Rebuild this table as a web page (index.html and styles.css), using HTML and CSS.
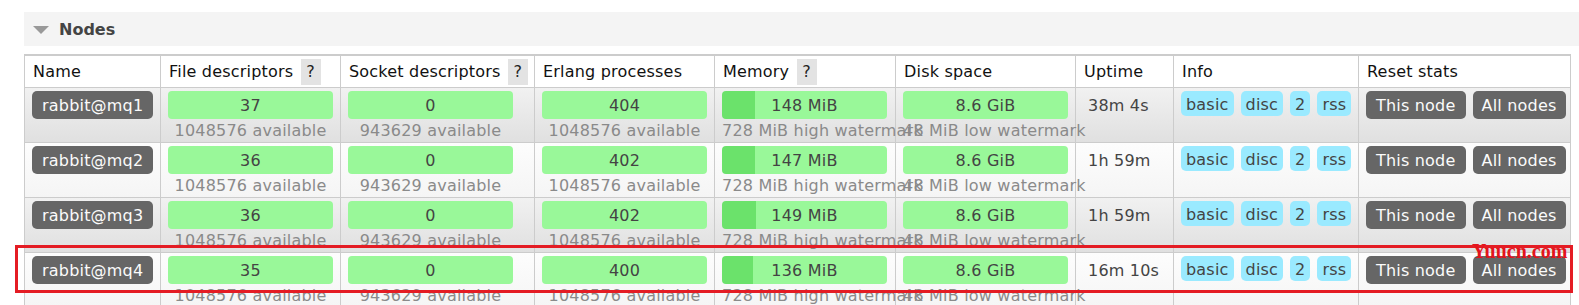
FILE: index.html
```html
<!DOCTYPE html>
<html>
<head>
<meta charset="utf-8">
<title>Nodes</title>
<link rel="stylesheet" href="styles.css">
</head>
<body>
<section class="section">
  <h2 class="section-title"><span class="toggle"></span>Nodes</h2>
  <table class="list">
    <colgroup>
      <col class="w-name"><col class="w-fd"><col class="w-sd"><col class="w-ep"><col class="w-mem"><col class="w-disk"><col class="w-up"><col class="w-info"><col class="w-reset">
    </colgroup>
    <thead>
      <tr>
        <th>Name</th>
        <th>File descriptors <span class="help">?</span></th>
        <th>Socket descriptors <span class="help">?</span></th>
        <th>Erlang processes</th>
        <th>Memory <span class="help">?</span></th>
        <th>Disk space</th>
        <th>Uptime</th>
        <th>Info</th>
        <th>Reset stats</th>
      </tr>
    </thead>
    <tbody>
      <tr class="alt1">
        <td><span class="node">rabbit@mq1</span></td>
        <td><div class="bar">37</div><div class="sub">1048576 available</div></td>
        <td><div class="bar">0</div><div class="sub">943629 available</div></td>
        <td><div class="bar">404</div><div class="sub">1048576 available</div></td>
        <td><div class="bar bar-mem" style="--used: 20.3%">148 MiB</div><div class="sub">728 MiB high watermark</div></td>
        <td><div class="bar">8.6 GiB</div><div class="sub">48 MiB low watermark</div></td>
        <td><div class="uptime">38m 4s</div></td>
        <td><div class="badges"><span class="badge">basic</span><span class="badge">disc</span><span class="badge">2</span><span class="badge">rss</span></div></td>
        <td><div class="buttons"><span class="btn">This node</span><span class="btn">All nodes</span></div></td>
      </tr>
      <tr class="alt2">
        <td><span class="node">rabbit@mq2</span></td>
        <td><div class="bar">36</div><div class="sub">1048576 available</div></td>
        <td><div class="bar">0</div><div class="sub">943629 available</div></td>
        <td><div class="bar">402</div><div class="sub">1048576 available</div></td>
        <td><div class="bar bar-mem" style="--used: 20.2%">147 MiB</div><div class="sub">728 MiB high watermark</div></td>
        <td><div class="bar">8.6 GiB</div><div class="sub">48 MiB low watermark</div></td>
        <td><div class="uptime">1h 59m</div></td>
        <td><div class="badges"><span class="badge">basic</span><span class="badge">disc</span><span class="badge">2</span><span class="badge">rss</span></div></td>
        <td><div class="buttons"><span class="btn">This node</span><span class="btn">All nodes</span></div></td>
      </tr>
      <tr class="alt1">
        <td><span class="node">rabbit@mq3</span></td>
        <td><div class="bar">36</div><div class="sub">1048576 available</div></td>
        <td><div class="bar">0</div><div class="sub">943629 available</div></td>
        <td><div class="bar">402</div><div class="sub">1048576 available</div></td>
        <td><div class="bar bar-mem" style="--used: 20.5%">149 MiB</div><div class="sub">728 MiB high watermark</div></td>
        <td><div class="bar">8.6 GiB</div><div class="sub">48 MiB low watermark</div></td>
        <td><div class="uptime">1h 59m</div></td>
        <td><div class="badges"><span class="badge">basic</span><span class="badge">disc</span><span class="badge">2</span><span class="badge">rss</span></div></td>
        <td><div class="buttons"><span class="btn">This node</span><span class="btn">All nodes</span></div></td>
      </tr>
      <tr class="alt2">
        <td><span class="node">rabbit@mq4</span></td>
        <td><div class="bar">35</div><div class="sub">1048576 available</div></td>
        <td><div class="bar">0</div><div class="sub">943629 available</div></td>
        <td><div class="bar">400</div><div class="sub">1048576 available</div></td>
        <td><div class="bar bar-mem" style="--used: 18.7%">136 MiB</div><div class="sub">728 MiB high watermark</div></td>
        <td><div class="bar">8.6 GiB</div><div class="sub">48 MiB low watermark</div></td>
        <td><div class="uptime">16m 10s</div></td>
        <td><div class="badges"><span class="badge">basic</span><span class="badge">disc</span><span class="badge">2</span><span class="badge">rss</span></div></td>
        <td><div class="buttons"><span class="btn">This node</span><span class="btn">All nodes</span></div></td>
      </tr>
    </tbody>
  </table>
</section>
<div class="highlight"></div>
<div class="watermark">Yuucn.com</div>
</body>
</html>
```

FILE: styles.css
```css
* { box-sizing: border-box; }

body {
  margin: 0;
  width: 1579px;
  height: 305px;
  overflow: hidden;
  position: relative;
  background: #fff;
  font-family: "DejaVu Sans", Verdana, sans-serif;
  font-size: 16px;
  letter-spacing: 0.2px;
  color: #444;
}

.section {
  padding: 12px 0 0 24px;
}

.section-title {
  margin: 0;
  height: 34px;
  background: #f4f4f4;
  display: flex;
  align-items: center;
  gap: 10px;
  padding-left: 9px;
  font-size: 16px;
  font-weight: bold;
  letter-spacing: 0;
  color: #444;
}

.toggle {
  width: 0;
  height: 0;
  border-left: 8px solid transparent;
  border-right: 8px solid transparent;
  border-top: 8px solid #999;
  margin-top: 1px;
}

.list {
  margin-top: 8px;
  width: 1547px;
  table-layout: fixed;
  border-collapse: separate;
  border-spacing: 0;
  border-top: 2px solid #ccc;
  border-left: 1px solid #ccc;
}

.w-name { width: 136px; }
.w-fd { width: 180px; }
.w-sd { width: 194px; }
.w-ep { width: 180px; }
.w-mem { width: 181px; }
.w-disk { width: 180px; }
.w-up { width: 98px; }
.w-info { width: 185px; }
.w-reset { width: 212px; }

.list th,
.list td {
  border-right: 1px solid #ccc;
  border-bottom: 1px solid #ccc;
}

.list th {
  background: #fff;
  color: #111;
  font-weight: normal;
  text-align: left;
  vertical-align: baseline;
  white-space: nowrap;
  line-height: 19px;
  padding: 3px 8px 2px;
}

.help {
  display: inline-block;
  width: 20px;
  height: 26px;
  line-height: 26px;
  text-align: center;
  background: #e3e3e3;
  color: #222;
  margin-left: 2px;
}

.list td {
  vertical-align: top;
  padding: 3px 7px 2px;
  white-space: nowrap;
}

.alt1 td { background: linear-gradient(#f1f1f1, #e0e0e0); }
.alt2 td { background: linear-gradient(#fdfdfd, #f5f5f5); }

.node,
.btn {
  display: inline-block;
  height: 28px;
  line-height: 26px;
  padding: 2px 10px 0;
  background: #666;
  color: #fbfbfb;
  border-radius: 5px;
}

.bar {
  width: 165px;
  height: 28px;
  line-height: 26px;
  padding-top: 2px;
  text-align: center;
  background: #99f899;
  border-radius: 4px;
  color: #444;
}

.bar-mem {
  background: linear-gradient(to right, #6be26b 0, #6be26b var(--used), #99f899 var(--used));
}

.sub {
  width: 165px;
  margin-top: 2px;
  line-height: 19px;
  text-align: center;
  color: #8a8a8a;
  white-space: nowrap;
}

.uptime {
  height: 28px;
  line-height: 26px;
  padding: 2px 0 0 5px;
  color: #444;
}

.badges {
  display: flex;
  gap: 7px;
}

.badge {
  height: 25px;
  line-height: 23px;
  padding: 2px 5px 0;
  background: #9aeaff;
  color: #444;
  border-radius: 5px;
}

.buttons {
  display: flex;
  gap: 7px;
}

.buttons .btn + .btn {
  padding: 2px 9px 0;
}

.highlight {
  position: absolute;
  left: 15px;
  top: 245px;
  width: 1558px;
  height: 48px;
  border: 3px solid #e41c24;
}

.watermark {
  position: absolute;
  left: 1472px;
  top: 241px;
  font-family: "Liberation Serif", "Times New Roman", serif;
  font-weight: bold;
  font-size: 20px;
  line-height: 20px;
  letter-spacing: 0;
  color: #e4141c;
}
```
